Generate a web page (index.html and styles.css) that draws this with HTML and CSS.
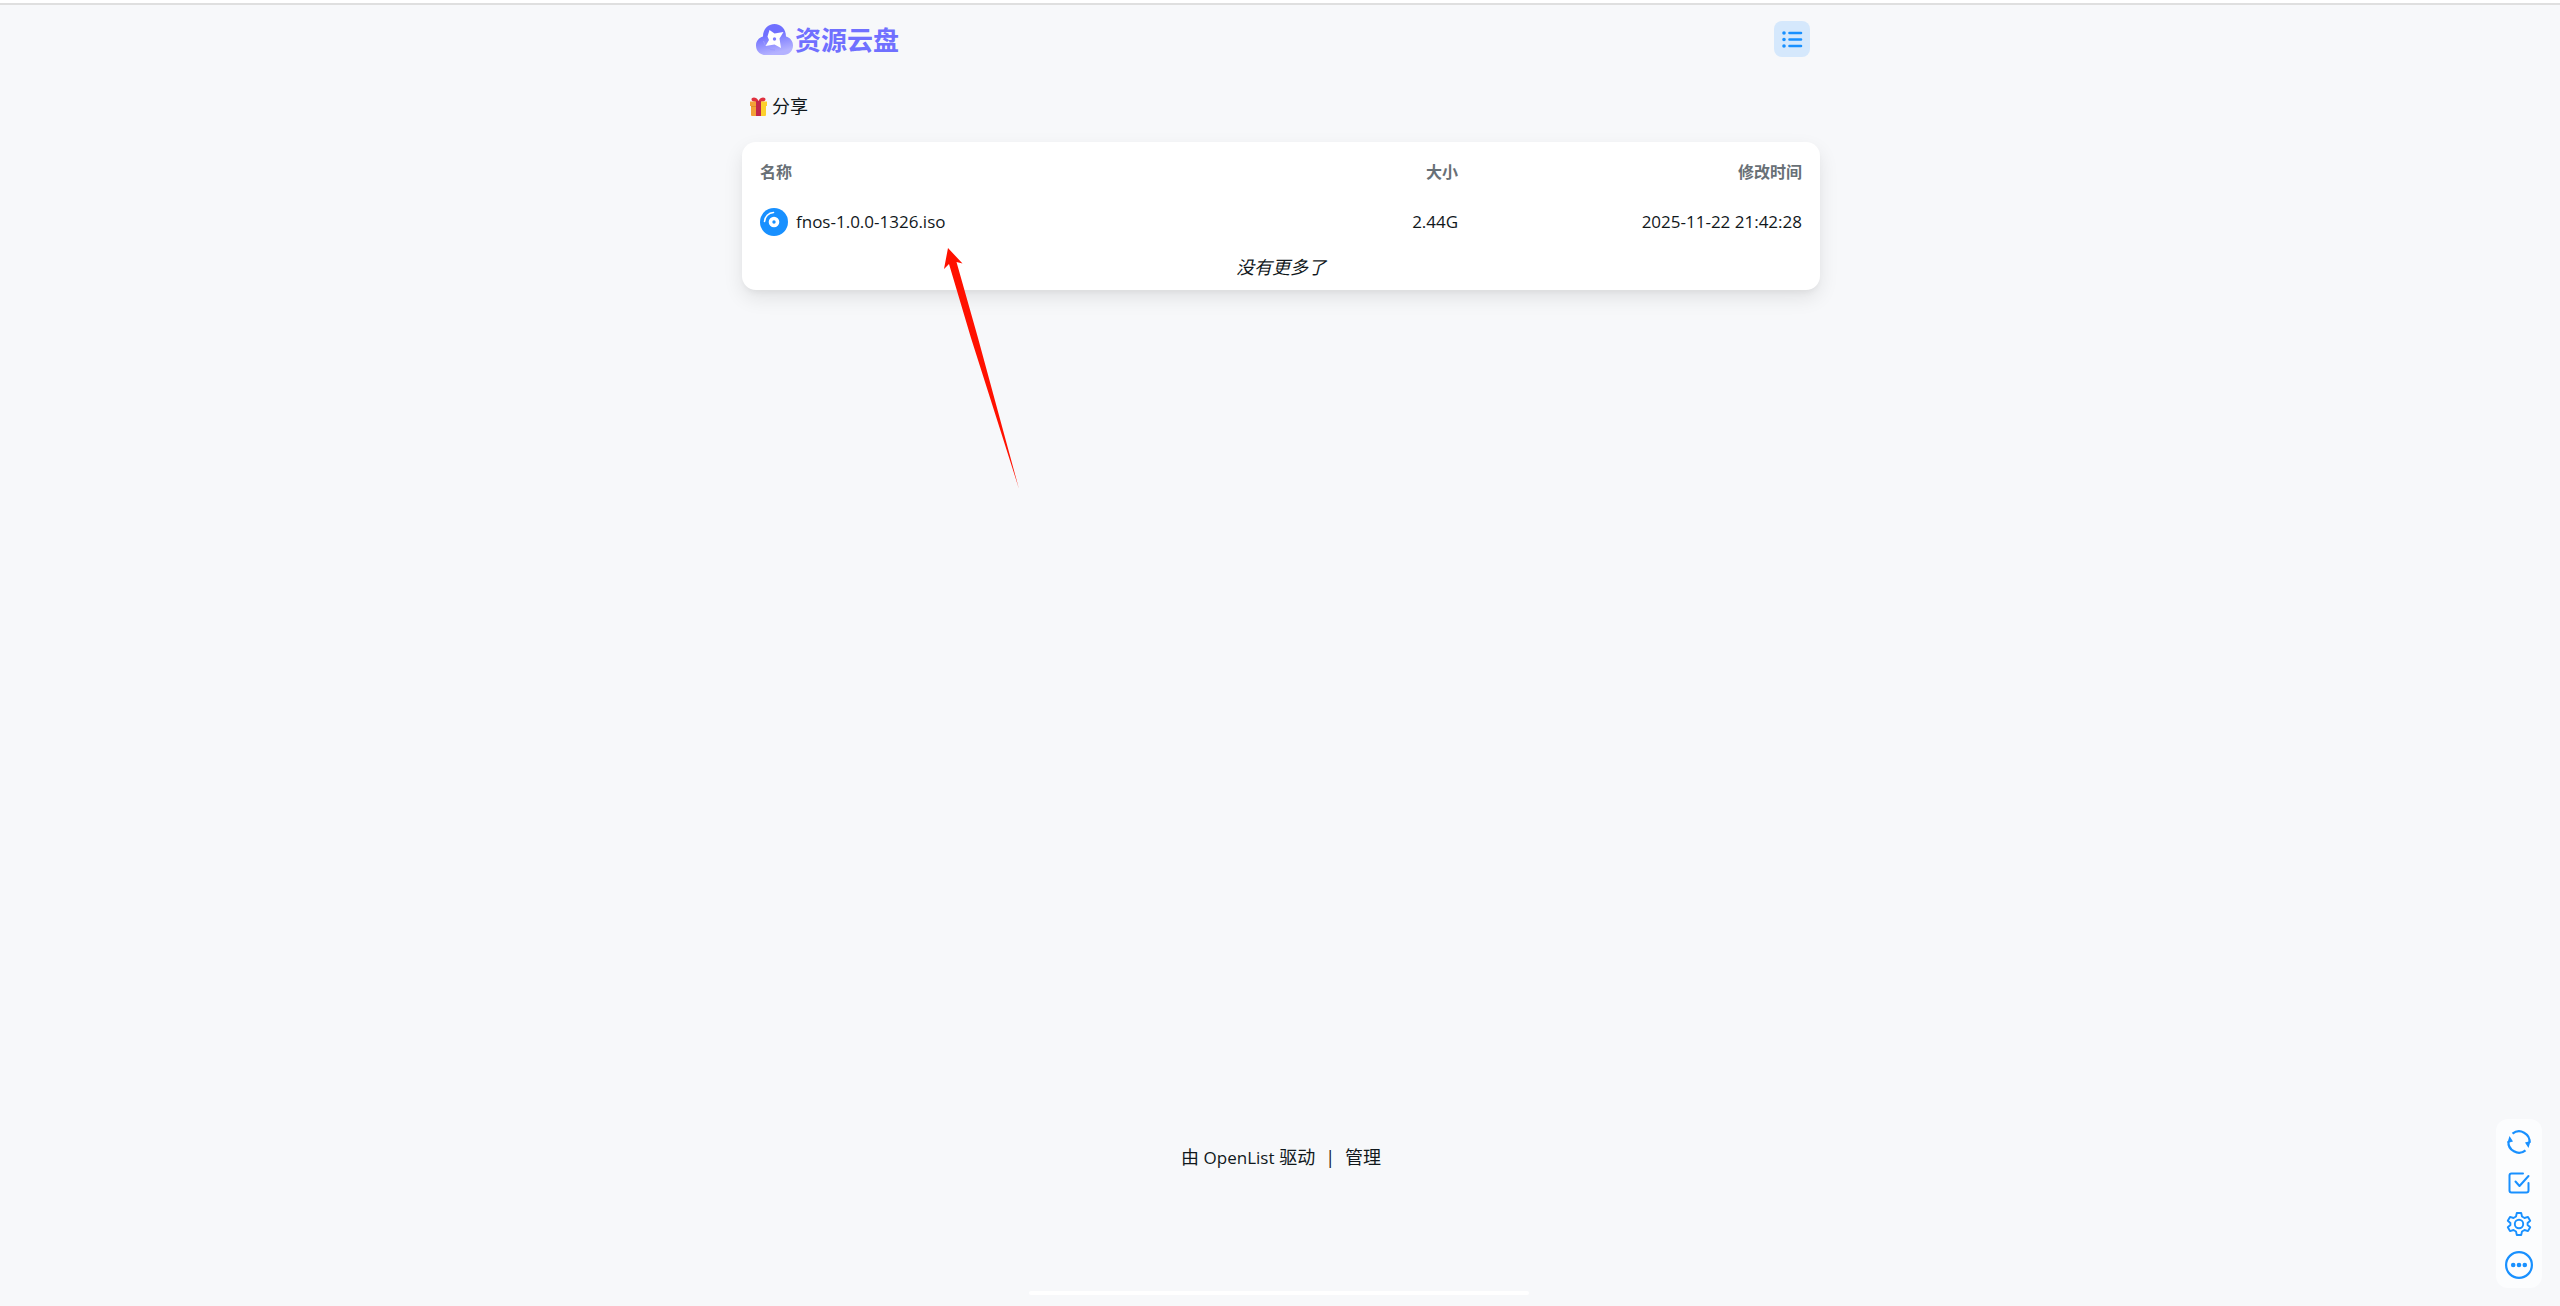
FILE: index.html
```
<!DOCTYPE html>
<html lang="zh-CN">

<head>
    <meta charset="UTF-8">
    <meta name="viewport" content="width=device-width, initial-scale=1.0">
    <title>资源云盘</title>
    <link rel="stylesheet" href="styles.css">
</head>

<body>
    <div class="page">
        <header class="header">
            <a class="logo" href="#">
                <svg class="logo-icon" viewBox="0 0 37 31">
                    <defs>
                        <linearGradient id="cloud" x1="0" y1="0" x2="0.3" y2="1">
                            <stop offset="0.4" stop-color="#7070ff" />
                            <stop offset="1" stop-color="#b4b2ff" />
                        </linearGradient>
                    </defs>
                    <path fill="url(#cloud)" d="M7 12.500C7 5 12 0 18.500 0S30 5 30 12.500C34 13.500 37 17 37 21.500C37 27 33 31 27.500 31H9.500C4 31 0 27 0 21.500C0 17 3 13.500 7 12.500Z" />
                    <path fill="none" stroke="#9c9bff" d="M7.500 17A11 11 0 0 0 19 26" />
                    <path fill="#fff" d="M13.500 6L18.500 9.500L27.500 8L23.500 14.500L25 24L18.500 20.500L9.500 22L13 16L11.500 12.500Z" />
                    <circle cx="18.500" cy="15" r="1.700" fill="#7d7dff" />
                </svg>
                <span class="logo-text">资源云盘</span>
            </a>
            <button class="layout-btn" aria-label="列表">
                <svg width="22" height="22" viewBox="0 0 22 22" fill="none" stroke="#1890ff" stroke-width="2.600" stroke-linecap="round">
                    <path d="M8.500 5H20M8.500 11.500H20M8.500 18H20" />
                    <path stroke-width="3.600" d="M3 5h.01M3 11.500h.01M3 18h.01" />
                </svg>
            </button>
        </header>

        <nav class="nav">
            <a class="nav-link" href="#">
                <svg class="gift" width="17" height="19" viewBox="0 0 17 19">
                    <path fill="#e0303e" d="M8.500 5C5 5 1.500 4.500 1.500 2.500C1.500 0 6.500-.5 8.500 4C10.500-.5 15.500 0 15.500 2.500C15.500 4.500 12 5 8.500 5Z" />
                    <path fill="#f2a136" d="M0 4.500h8.500V19H2a1 1 0 0 1-1-1V9H0Z" />
                    <path fill="#fdd02c" d="M8.500 4.500H17V9h-1v9a1 1 0 0 1-1 1H8.500Z" />
                    <path fill="#dd8d2a" d="M1 9h5v1H1Z" />
                    <path fill="#c2264b" d="M6 4h5v15H6Z" />
                </svg>
                <span>分享</span>
            </a>
        </nav>

        <main class="card">
            <table class="files">
                <thead>
                    <tr>
                        <th class="name">名称</th>
                        <th class="size">大小</th>
                        <th class="time">修改时间</th>
                    </tr>
                </thead>
                <tbody>
                    <tr>
                        <td class="name">
                            <a class="file" href="#">
                                <svg width="28" height="28" viewBox="0 0 28 28">
                                    <circle cx="14" cy="14" r="14" fill="#1890ff" />
                                    <circle cx="14" cy="14" r="3.500" fill="none" stroke="#fff" stroke-width="3.600" />
                                    <path fill="none" stroke="#fff" stroke-width="1.600" stroke-linecap="round" d="M4.500 13.500A9.500 9.500 0 0 1 13.500 4.500" />
                                </svg>
                                <span>fnos-1.0.0-1326.iso</span>
                            </a>
                        </td>
                        <td class="size">2.44G</td>
                        <td class="time">2025-11-22 21:42:28</td>
                    </tr>
                </tbody>
            </table>
            <p class="no-more">没有更多了</p>
        </main>

        <footer class="footer">
            <a href="#">由 <span class="latin">OpenList</span> 驱动</a>
            <span>|</span>
            <a href="#">管理</a>
        </footer>
    </div>

    <!-- 右下角工具栏 -->
    <div class="toolbar">
        <button class="tool" aria-label="刷新">
            <svg width="28" height="28" viewBox="0 0 28 28" fill="none" stroke="#1890ff" stroke-width="2.200">
                <path d="M3.500 13A10.500 10.500 0 0 0 20.500 22.300" />
                <path d="M24.500 15A10.500 10.500 0 0 0 7.500 5.700" />
                <path fill="#1890ff" stroke="none" d="M4.500 8L8 13.500L2.400 15ZM20 14.500L25.600 13L23.500 20Z" />
            </svg>
        </button>
        <button class="tool" aria-label="多选">
            <svg width="28" height="28" viewBox="0 0 28 28" fill="none" stroke="#1890ff" stroke-width="2" stroke-linecap="round" stroke-linejoin="round">
                <path d="M18 4.500H6.500A2 2 0 0 0 4.500 6.500V21.500A2 2 0 0 0 6.500 23.500H21.500A2 2 0 0 0 23.500 21.500V14" />
                <path d="M10.500 12.500L14.500 17L23.500 7" />
            </svg>
        </button>
        <button class="tool" aria-label="设置">
            <svg width="28" height="28" viewBox="0 0 28 28" fill="none" stroke="#1890ff" stroke-width="1.900" stroke-linejoin="round">
                <path d="M11.800 3H16.200L17 6.500L19.500 8L23 6.900L25.200 10.700L22.600 13V15L25.200 17.300L23 21.100L19.500 20L17 21.500L16.200 25H11.800L11 21.500L8.500 20L5 21.100L2.800 17.300L5.400 15V13L2.800 10.700L5 6.900L8.500 8L11 6.500Z" />
                <circle cx="14" cy="14" r="4.200" />
            </svg>
        </button>
        <button class="tool" aria-label="更多">
            <svg width="28" height="28" viewBox="0 0 28 28" fill="#1890ff">
                <circle cx="14" cy="14" r="12.900" fill="none" stroke="#1890ff" stroke-width="2.200" />
                <circle cx="8.200" cy="14" r="2.300" />
                <circle cx="14" cy="14" r="2.300" />
                <circle cx="19.800" cy="14" r="2.300" />
            </svg>
        </button>
    </div>

    <!-- 红色箭头 -->
    <svg class="arrow" width="76" height="242" viewBox="0 0 76 242">
        <path fill="#ff1100" d="M4 0L18.500 15.500L12.500 14L34 90L75 241L27 90L5 16L0 21Z" />
    </svg>

    <div class="bottom-bar"></div>
</body>

</html>
```
FILE: styles.css
```
* {
    box-sizing: border-box;
    margin: 0;
    padding: 0;
}

body {
    position: relative;
    min-height: 100vh;
    border-top: 3px solid #fff;
    background-color: #f7f8fa;
    color: #11181c;
    font-family: "Open Sans", "Noto Sans CJK SC", sans-serif;
    font-size: 18px;
    line-height: 28px;
}

a {
    color: inherit;
    text-decoration: none;
}

button {
    border: none;
    background: none;
    cursor: pointer;
}

svg {
    display: block;
}

.page {
    display: flex;
    flex-direction: column;
    align-items: center;
    min-height: calc(100vh - 3px);
    padding-left: 2px;
    border-top: 2px solid #dfdfdf;
}

.header,
.nav,
.card {
    width: 100%;
    max-width: 1078px;
}

.header {
    display: flex;
    align-items: center;
    justify-content: space-between;
    height: 68px;
    padding: 0 10px 0 14px;
}

.logo {
    display: flex;
    align-items: center;
    gap: 2px;
}

.logo-icon {
    width: 37px;
    height: 31px;
}

.logo-text {
    color: #7070ff;
    font-family: "Noto Sans CJK SC", sans-serif;
    font-size: 26px;
    font-weight: 700;
}

.layout-btn {
    display: flex;
    align-items: center;
    justify-content: center;
    width: 36px;
    height: 36px;
    border-radius: 8px;
    background-color: #d5e8fc;
}

.nav {
    padding: 19px 8px 22px;
}

.nav-link {
    display: flex;
    align-items: center;
    gap: 5px;
}

.card {
    padding: 11px 18px 9px;
    border-radius: 14px;
    background-color: #fff;
    box-shadow: 0 8px 20px rgba(0, 0, 0, 0.09), 0 4px 6px -2px rgba(0, 0, 0, 0.05);
}

.files {
    width: 100%;
    border-collapse: collapse;
    table-layout: fixed;
}

.files th {
    height: 38px;
    color: #687076;
    font-size: 16px;
    font-weight: 700;
}

.files td {
    height: 62px;
    font-size: 17px;
}

.files .name {
    width: 50%;
    text-align: left;
}

.files .size {
    width: 17%;
    text-align: right;
}

.files .time {
    width: 33%;
    text-align: right;
}

.file {
    display: flex;
    align-items: center;
    gap: 8px;
}

.no-more {
    font-style: italic;
    text-align: center;
}

.footer {
    display: flex;
    gap: 10px;
    margin-top: auto;
    padding-bottom: 134px;
}

.latin {
    font-size: 17px;
}

.toolbar {
    position: fixed;
    right: 18px;
    bottom: 18px;
    display: flex;
    flex-direction: column;
    align-items: center;
    gap: 13px;
    padding: 9px;
    border-radius: 12px;
    background-color: #fcfdfe;
}

.arrow {
    position: absolute;
    top: 245px;
    left: calc(50% - 336px);
    pointer-events: none;
}

.bottom-bar {
    position: fixed;
    bottom: 11px;
    left: 50%;
    width: 500px;
    height: 4px;
    margin-left: -251px;
    border-radius: 2px;
    background-color: #fff;
}
```
